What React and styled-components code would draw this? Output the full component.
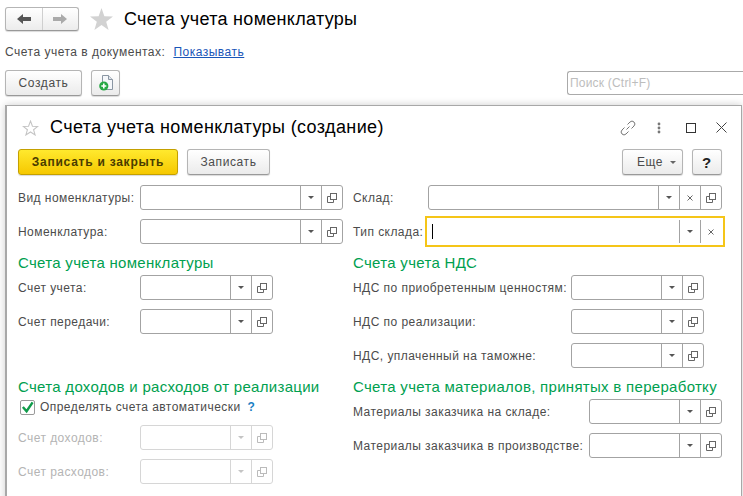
import styled, { createGlobalStyle } from 'styled-components'

const Global = createGlobalStyle`
  html, body {
    margin: 0;
    padding: 0;
    background: #fff;
    overflow: hidden;
  }
  * {
    box-sizing: border-box;
  }
`

const Page = styled.div`
  width: 743px;
  height: 496px;
  overflow: hidden;
  padding: 7px 0 0 5px;
  font-family: 'Liberation Sans', Arial, sans-serif;
  font-size: 12px;
  color: #4b4b4b;
`

const TopBar = styled.div`
  display: flex;
  align-items: center;
  height: 24px;
`

const NavGroup = styled.div`
  display: flex;
  width: 74px;
  height: 24px;
  border: 1px solid #b5b5b5;
  border-bottom-color: #999;
  border-radius: 3px;
  background: linear-gradient(#fff, #ececec);
  box-shadow: 0 1px 1px rgba(0, 0, 0, 0.15);
`

const NavButton = styled.div`
  flex: 1;
  display: flex;
  align-items: center;
  justify-content: center;
  & + & {
    border-left: 1px solid #cfcfcf;
  }
`

const PageTitle = styled.h1`
  margin: 0 0 0 11px;
  font-size: 18px;
  font-weight: normal;
  color: #000;
  letter-spacing: 0.3px;
`

const BigStar = styled.svg`
  margin-left: 11px;
`

const InfoLine = styled.div`
  display: flex;
  gap: 8px;
  margin-top: 14px;
  height: 14px;
  line-height: 14px;
  letter-spacing: 0.5px;
`

const DocLink = styled.a`
  color: #1a56b8;
  text-decoration: underline;
`

const ListBar = styled.div`
  display: flex;
  align-items: center;
  gap: 9px;
  margin-top: 11px;
  height: 26px;
`

const Button = styled.div`
  display: flex;
  align-items: center;
  justify-content: center;
  flex: none;
  width: ${p => p.$w}px;
  height: 26px;
  gap: 7px;
  border: 1px solid #b5b5b5;
  border-bottom-color: #999;
  border-radius: 3px;
  background: linear-gradient(#fff, #ebebeb);
  box-shadow: 0 1px 1px rgba(0, 0, 0, 0.15);
  letter-spacing: 0.6px;
`

const MoreButton = styled(Button)`
  padding-left: 8px;
`

const PrimaryButton = styled(Button)`
  border-color: #c4a000;
  background: linear-gradient(#ffe92e, #f6c800);
  color: #4a3c00;
  font-weight: bold;
  letter-spacing: 0.75px;
`

const HelpButton = styled(Button)`
  color: #222;
  font-size: 15px;
  font-weight: bold;
`

const Search = styled.div`
  margin-left: auto;
  width: 176px;
  height: 24px;
  line-height: 22px;
  padding-left: 2px;
  border: 1px solid #aaa;
  border-right: 0;
  border-radius: 3px 0 0 3px;
  color: #bdbdbd;
  font-size: 12px;
  letter-spacing: 0.2px;
`

const Dialog = styled.div`
  margin-top: 9px;
  width: 737px;
  height: 420px;
  padding: 0 12px 0 11px;
  background: #fff;
  border: 1px solid #a8a8a8;
  border-left-width: 2px;
  box-shadow: 0 0 8px rgba(0, 0, 0, 0.2);
`

const DialogHead = styled.div`
  display: flex;
  align-items: center;
  height: 43px;
  padding-left: 4px;
`

const DialogTitle = styled.h2`
  margin: 0 0 0 11px;
  font-size: 18px;
  font-weight: normal;
  color: #000;
  letter-spacing: 0.38px;
`

const WindowTools = styled.div`
  display: flex;
  align-items: center;
  margin-left: auto;
  margin-right: 2px;
`

const ToolSlot = styled.div`
  display: flex;
  align-items: center;
  width: ${p => p.$w}px;
`

const CommandBar = styled.div`
  display: flex;
  gap: 9px;
  height: 26px;
`

const PushRight = styled.div`
  margin-left: auto;
  display: flex;
  gap: 9px;
  margin-right: 7px;
`

const Form = styled.div`
  display: grid;
  grid-template-columns: 335px 372px;
  margin-top: 10px;
`

const Column = styled.div`
  display: flex;
  flex-direction: column;
`

const Row = styled.div`
  display: flex;
  align-items: center;
  height: 25px;
  margin-bottom: 9px;
`

const EmptyRow = styled.div`
  height: 34px;
`

const Label = styled.div`
  flex: none;
  width: ${p => p.$w}px;
  white-space: nowrap;
  color: ${p => (p.$off ? '#b4b4b4' : '#4b4b4b')};
  letter-spacing: 0.45px;
`

const Heading = styled.div`
  height: 22px;
  line-height: 20px;
  color: #00a04f;
  font-size: 15px;
  white-space: nowrap;
  letter-spacing: 0.3px;
`

const FieldBox = styled.div`
  display: flex;
  flex: none;
  width: ${p => p.$w}px;
  height: 25px;
  border-radius: 3px;
  background: #fff;
  border: 1px solid ${p => (p.$off ? '#d6d6d6' : '#a3a3a3')};
  ${p => p.$focus && `
    border-color: transparent;
    outline: 2px solid #f5c518;
    outline-offset: 1px;
    border-radius: 0;
  `}
`

const FieldInput = styled.div`
  flex: 1;
  display: flex;
  align-items: center;
  padding-left: 3px;
`

const Caret = styled.div`
  width: 1px;
  height: 15px;
  background: #000;
`

const FieldBtn = styled.div`
  flex: none;
  width: 21px;
  display: flex;
  align-items: center;
  justify-content: center;
  border-left: 1px solid ${p => (p.$off ? '#d6d6d6' : '#a3a3a3')};
`

const CheckLine = styled.div`
  display: flex;
  align-items: center;
  height: 26px;
  padding: 0 0 10px 2px;
  letter-spacing: 0.45px;
`

const CheckBox = styled.div`
  width: 15px;
  height: 15px;
  border: 1px solid #9a9a9a;
  border-radius: 2px;
  display: flex;
  align-items: center;
  justify-content: center;
  margin-right: 5px;
`

const Hint = styled.span`
  margin-left: 7px;
  color: #1c7fc4;
  font-weight: bold;
`

function ArrowLeft({ color }) {
  return (
    <svg width="14" height="10" viewBox="0 0 14 10">
      <path d="M0 5 L6 0 V3 H14 V7 H6 V10 Z" fill={color} />
    </svg>
  )
}

function ArrowRight({ color }) {
  return (
    <svg width="14" height="10" viewBox="0 0 14 10">
      <path d="M14 5 L8 0 V3 H0 V7 H8 V10 Z" fill={color} />
    </svg>
  )
}

function AddDoc() {
  return (
    <svg width="14" height="16" viewBox="0 0 14 16">
      <path d="M3.5 .5 H9.5 L13.5 4.5 V14.5 H3.5 Z" fill="#f5f7fa" stroke="#8a96a3" />
      <path d="M9.5 .5 V4.5 H13.5" fill="#dfe4ea" stroke="#8a96a3" />
      <circle cx="4.8" cy="11" r="4.6" fill="#27a844" />
      <path d="M4.8 8.5 V13.5 M2.3 11 H7.3" stroke="#fff" strokeWidth="1.6" />
    </svg>
  )
}

function CopyIcon({ color }) {
  return (
    <svg width="10" height="10" viewBox="0 0 10 10" fill="none" stroke={color}>
      <rect x="3.5" y=".5" width="6" height="6" />
      <path d="M3.5 3.5 H.5 V9.5 H6.5 V6.5" />
    </svg>
  )
}

function DropIcon({ color }) {
  return (
    <svg width="6" height="3" viewBox="0 0 6 3">
      <path d="M0 0 H6 L3 3 Z" fill={color} />
    </svg>
  )
}

function ClearIcon() {
  return (
    <svg width="6" height="6" viewBox="0 0 6 6" stroke="#666" fill="none">
      <path d="M.5 .5 L5.5 5.5 M5.5 .5 L.5 5.5" />
    </svg>
  )
}

function Field({ w, focus, off, clear, noOpen }) {
  const color = off ? '#c4c4c4' : '#555'
  return (
    <FieldBox $w={w} $focus={focus} $off={off}>
      <FieldInput>{focus && <Caret />}</FieldInput>
      <FieldBtn $off={off}>
        <DropIcon color={color} />
      </FieldBtn>
      {clear && (
        <FieldBtn>
          <ClearIcon />
        </FieldBtn>
      )}
      {!noOpen && (
        <FieldBtn $off={off}>
          <CopyIcon color={off ? '#bbb' : '#666'} />
        </FieldBtn>
      )}
    </FieldBox>
  )
}

function FormRow({ label, labelW, w, off, ...rest }) {
  return (
    <Row>
      <Label $w={labelW} $off={off}>{label}</Label>
      <Field w={w} off={off} {...rest} />
    </Row>
  )
}

export default function App() {
  return (
    <Page>
      <Global />
      <TopBar>
        <NavGroup>
          <NavButton><ArrowLeft color="#555" /></NavButton>
          <NavButton><ArrowRight color="#aaa" /></NavButton>
        </NavGroup>
        <BigStar width="23" height="22" viewBox="0 0 24 23">
          <path d="M12 0 L15 8.6 L24 8.8 L16.9 14.3 L19.4 23 L12 17.8 L4.6 23 L7.1 14.3 L0 8.8 L9 8.6 Z" fill="#d2d2d2" />
        </BigStar>
        <PageTitle>Счета учета номенклатуры</PageTitle>
      </TopBar>
      <InfoLine>
        <span>Счета учета в документах:</span>
        <DocLink>Показывать</DocLink>
      </InfoLine>
      <ListBar>
        <Button $w={77}>Создать</Button>
        <Button $w={29}><AddDoc /></Button>
        <Search>Поиск (Ctrl+F)</Search>
      </ListBar>
      <Dialog>
        <DialogHead>
          <svg width="17" height="16" viewBox="0 0 24 23">
            <path d="M12 1.5 L14.8 8.9 L22.5 9.2 L16.4 14 L18.6 21.5 L12 17.2 L5.4 21.5 L7.6 14 L1.5 9.2 L9.2 8.9 Z" fill="none" stroke="#c4c4c4" strokeWidth="1.5" />
          </svg>
          <DialogTitle>Счета учета номенклатуры (создание)</DialogTitle>
          <WindowTools>
            <ToolSlot $w={37}>
              <svg width="16" height="16" viewBox="0 0 16 16" fill="none" stroke="#777" strokeWidth="1">
                <path d="M6.5 9.5 L9.5 6.5" />
                <path d="M7.5 4.5 L10 2 A2.8 2.8 0 0 1 14 6 L11.5 8.5" />
                <path d="M8.5 11.5 L6 14 A2.8 2.8 0 0 1 2 10 L4.5 7.5" />
              </svg>
            </ToolSlot>
            <ToolSlot $w={29}>
              <svg width="4" height="12" viewBox="0 0 4 12" fill="#777">
                <circle cx="2" cy="2" r="1.4" />
                <circle cx="2" cy="6" r="1.4" />
                <circle cx="2" cy="10" r="1.4" />
              </svg>
            </ToolSlot>
            <ToolSlot $w={30}>
              <svg width="10" height="10" viewBox="0 0 10 10" fill="none" stroke="#333">
                <rect x=".5" y=".5" width="9" height="9" />
              </svg>
            </ToolSlot>
            <ToolSlot $w={11}>
              <svg width="11" height="11" viewBox="0 0 11 11" fill="none" stroke="#444">
                <path d="M.5 .5 L10.5 10.5 M10.5 .5 L.5 10.5" />
              </svg>
            </ToolSlot>
          </WindowTools>
        </DialogHead>
        <CommandBar>
          <PrimaryButton $w={160}>Записать и закрыть</PrimaryButton>
          <Button $w={83}>Записать</Button>
          <PushRight>
            <MoreButton $w={61}>Еще <DropIcon color="#666" /></MoreButton>
            <HelpButton $w={30}>?</HelpButton>
          </PushRight>
        </CommandBar>
        <Form>
          <Column>
            <FormRow label="Вид номенклатуры:" labelW={122} w={203} />
            <FormRow label="Номенклатура:" labelW={122} w={203} />
            <Heading>Счета учета номенклатуры</Heading>
            <FormRow label="Счет учета:" labelW={122} w={133} />
            <FormRow label="Счет передачи:" labelW={122} w={133} />
            <EmptyRow />
            <Heading>Счета доходов и расходов от реализации</Heading>
            <CheckLine>
              <CheckBox>
                <svg width="14" height="13" viewBox="0 0 14 13" fill="none">
                  <path d="M2 6 L6 10.5 L12.5 1" stroke="#0f9b4a" strokeWidth="2.6" />
                </svg>
              </CheckBox>
              Определять счета автоматически
              <Hint>?</Hint>
            </CheckLine>
            <FormRow label="Счет доходов:" labelW={122} w={133} off />
            <FormRow label="Счет расходов:" labelW={122} w={133} off />
          </Column>
          <Column>
            <FormRow label="Склад:" labelW={75} w={294} clear />
            <FormRow label="Тип склада:" labelW={75} w={294} clear focus noOpen />
            <Heading>Счета учета НДС</Heading>
            <FormRow label="НДС по приобретенным ценностям:" labelW={218} w={133} />
            <FormRow label="НДС по реализации:" labelW={218} w={133} />
            <FormRow label="НДС, уплаченный на таможне:" labelW={218} w={133} />
            <Heading>Счета учета материалов, принятых в переработку</Heading>
            <FormRow label="Материалы заказчика на складе:" labelW={236} w={133} />
            <FormRow label="Материалы заказчика в производстве:" labelW={236} w={133} />
          </Column>
        </Form>
      </Dialog>
    </Page>
  )
}
